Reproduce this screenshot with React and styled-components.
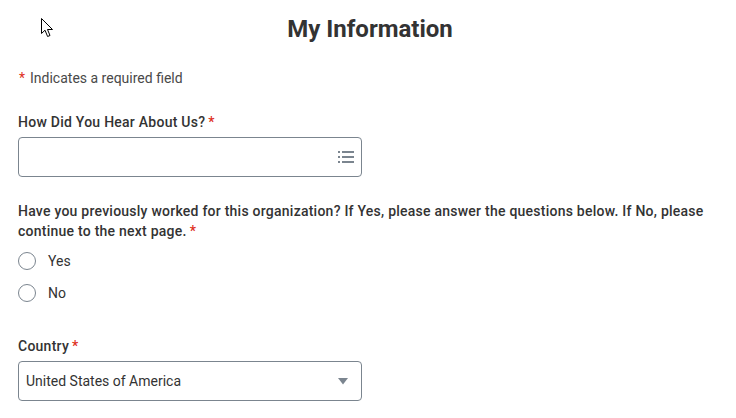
import React from "react";
import styled, { createGlobalStyle } from "styled-components";

const Global = createGlobalStyle`
  html, body { margin: 0; padding: 0; background: #fff; }
  body { font-family: Roboto, "Liberation Sans", Arial, sans-serif; color: #333; }
  * { box-sizing: border-box; }
`;

const Page = styled.div`
  position: relative;
  width: 736px;
  padding: 0 18px;
  display: flex;
  flex-direction: column;
`;

const Title = styled.h2`
  margin: 13px 0 0;
  font-size: 24px;
  line-height: 32px;
  font-weight: 700;
  color: #333333;
  text-align: center;
  padding-left: 4px;
`;

const Note = styled.p`
  margin: 23px 0 0;
  font-size: 14px;
  line-height: 20px;
  color: #494949;
`;

const Star = styled.span`
  color: #de2e21;
  letter-spacing: 0;
  margin-left: ${(p) => (p.$after ? "3px" : "1px")};
  margin-right: ${(p) => (p.$after ? "0" : "5px")};
`;

const Label = styled.div`
  margin-top: ${(p) => p.$top}px;
  font-size: 14px;
  line-height: 20px;
  font-weight: 500;
  letter-spacing: 0.25px;
  color: #333333;
`;

const Field = styled.div`
  margin-top: 5px;
  width: 344px;
  height: 40px;
  border: 1px solid #7b858f;
  border-radius: 4px;
  display: flex;
  align-items: center;
  justify-content: space-between;
  padding: 0 ${(p) => p.$padRight}px 0 7px;
  font-size: 14px;
  color: #333;
`;

const Question = styled.div`
  margin-top: 24px;
  max-width: 700px;
  font-size: 14px;
  line-height: 20px;
  font-weight: 500;
  letter-spacing: 0.24px;
  color: #333333;
`;

const Options = styled.div`
  margin-top: 4px;
  display: flex;
  flex-direction: column;
`;

const Option = styled.label`
  height: 32px;
  display: flex;
  align-items: center;
  gap: 12px;
  font-size: 14px;
  color: #333;
`;

const Circle = styled.span`
  width: 18px;
  height: 18px;
  border-radius: 50%;
  border: 1px solid #7b858f;
  background: #fff;
`;

const Cursor = styled.svg`
  position: absolute;
  left: 41px;
  top: 18px;
`;

const ListIcon = () => (
  <svg width="16" height="13" viewBox="0 0 16 13" fill="#7b858f">
    <rect x="0" y="0" width="2" height="2" />
    <rect x="4" y="0" width="12" height="2" />
    <rect x="0" y="5" width="2" height="2" />
    <rect x="4" y="5" width="12" height="2" />
    <rect x="0" y="10" width="2" height="2" />
    <rect x="4" y="10" width="12" height="2" />
  </svg>
);

const Caret = () => (
  <svg width="10" height="7" viewBox="0 0 10 7">
    <path d="M0 0 L10 0 L5 6.5 Z" fill="#7b858f" />
  </svg>
);

export default function App() {
  return (
    <>
      <Global />
      <Page>
        <Cursor width="13" height="20" viewBox="0 0 13 20">
          <path
            d="M0.5 0.5 L0.5 15.5 L4 12.2 L6.6 18.5 L9 17.5 L6.5 11.5 L11.5 11.5 Z"
            fill="#fff"
            stroke="#000"
            strokeWidth="1"
            strokeLinejoin="miter"
          />
        </Cursor>
        <Title>My Information</Title>
        <Note>
          <Star>*</Star>Indicates a required field
        </Note>
        <Label $top={24}>
          How Did You Hear About Us?<Star $after>*</Star>
        </Label>
        <Field $padRight={7}>
          <span />
          <ListIcon />
        </Field>
        <Question>
          Have you previously worked for this organization? If Yes, please answer the questions
          below. If No, please continue to the next page.<Star $after>*</Star>
        </Question>
        <Options>
          <Option>
            <Circle />
            Yes
          </Option>
          <Option>
            <Circle />
            No
          </Option>
        </Options>
        <Label $top={27}>
          Country<Star $after>*</Star>
        </Label>
        <Field $padRight={13}>
          <span>United States of America</span>
          <Caret />
        </Field>
      </Page>
    </>
  );
}
